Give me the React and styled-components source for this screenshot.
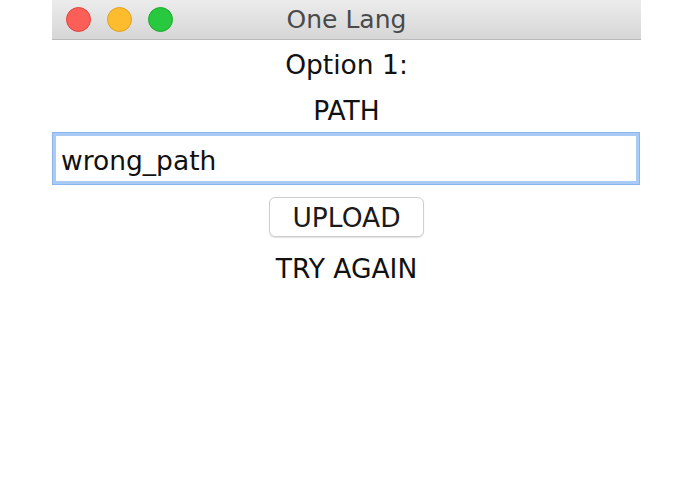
import React from "react";
import styled, { createGlobalStyle } from "styled-components";

const GlobalStyle = createGlobalStyle`
  html, body {
    margin: 0;
    padding: 0;
    background: #ffffff;
  }
  body {
    width: 695px;
    height: 494px;
    overflow: hidden;
    font-family: "DejaVu Sans", "Liberation Sans", sans-serif;
  }
`;

const Window = styled.div`
  width: 589px;
  margin-left: 52px;
  background: #ffffff;
  display: flex;
  flex-direction: column;
`;

const TitleBar = styled.div`
  height: 40px;
  box-sizing: border-box;
  display: flex;
  align-items: center;
  padding-left: 14px;
  background: linear-gradient(to bottom, #ececec 0%, #d6d6d6 100%);
  border-bottom: 1px solid #b9b9b9;
  position: relative;
`;

const Lights = styled.div`
  display: flex;
  gap: 16px;
`;

const Light = styled.span`
  width: 25px;
  height: 25px;
  border-radius: 50%;
  box-sizing: border-box;
  background: ${p => p.$fill};
  border: 1px solid ${p => p.$edge};
`;

const Title = styled.div`
  position: absolute;
  left: 0;
  right: 0;
  text-align: center;
  font-size: 25px;
  color: #4a4a4a;
  pointer-events: none;
`;

const Content = styled.div`
  display: flex;
  flex-direction: column;
  align-items: center;
  padding-top: 2px;
`;

const Label = styled.div`
  height: 46px;
  line-height: 46px;
  font-size: 26.5px;
  color: #111111;
  margin-top: ${p => p.$top || 0}px;
`;

const PathInput = styled.input`
  align-self: stretch;
  box-sizing: border-box;
  height: 53px;
  margin: -2px 0 0 0;
  padding: 3px 0 0 8px;
  border: 1px solid #8db5ec;
  box-shadow: 0 0 0 3px #a8cbf5 inset;
  outline: none;
  font-family: inherit;
  font-size: 26.5px;
  color: #111111;
  background: #ffffff;
  width: 588px;
`;

const Button = styled.button`
  margin-top: 12px;
  width: 155px;
  height: 40px;
  box-sizing: border-box;
  border: 1px solid #cfcfcf;
  border-radius: 6px;
  background: #ffffff;
  box-shadow: 0 1px 1px rgba(0, 0, 0, 0.12);
  font-family: inherit;
  font-size: 26.5px;
  color: #1a1a1a;
  padding: 0;
`;

export default function App() {
  return (
    <>
      <GlobalStyle />
      <Window>
        <TitleBar>
          <Lights>
            <Light $fill="#fc5f57" $edge="#e0443e" />
            <Light $fill="#fdbc2e" $edge="#dea123" />
            <Light $fill="#28c83f" $edge="#1aab29" />
          </Lights>
          <Title>One Lang</Title>
        </TitleBar>
        <Content>
          <Label>Option 1:</Label>
          <Label>PATH</Label>
          <PathInput defaultValue="wrong_path" />
          <Button>UPLOAD</Button>
          <Label $top={9}>TRY AGAIN</Label>
        </Content>
      </Window>
    </>
  );
}
